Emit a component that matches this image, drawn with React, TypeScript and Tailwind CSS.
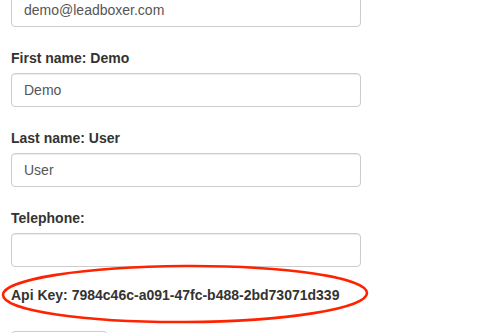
import type { FC } from 'react';

const font = { fontFamily: '"Liberation Sans", Arial, sans-serif' };

const Field: FC<{ label?: string; value: string }> = ({ label, value }) => (
  <div className="mb-[21px]">
    {label && (
      <label className="block mb-[5px] h-5 leading-5 text-[14px] font-bold text-[#333]">{label}</label>
    )}
    <input
      readOnly
      value={value}
      className="block w-full h-[34px] px-3 text-[14px] text-[#555] bg-white border border-[#ccc] rounded-[4px] shadow-[inset_0_1px_1px_rgba(0,0,0,0.075)] outline-none"
      style={font}
    />
  </div>
);

export default function App() {
  return (
    <div className="w-[496px] h-[333px] overflow-hidden bg-white" style={font}>
      <div className="relative w-[350px] ml-[11px] mt-[-7px]">
        <Field value="demo@leadboxer.com" />
        <Field label="First name: Demo" value="Demo" />
        <Field label="Last name: User" value="User" />
        <Field label="Telephone:" value="" />
        <div className="h-5 leading-5 text-[14px] font-bold text-[#333] mt-[-3px]">
          Api Key: 7984c46c-a091-47fc-b488-2bd73071d339
        </div>
        <div className="mt-[26px] w-[97px] h-[34px] border border-[#ccc] rounded-[4px] bg-white" />
        <svg
          className="absolute left-[-11px] top-[271px] pointer-events-none"
          width="372"
          height="62"
          viewBox="0 0 372 62"
        >
          <ellipse
            cx="185"
            cy="30"
            rx="182"
            ry="28"
            fill="none"
            stroke="#ff2200"
            strokeWidth="2.6"
            transform="rotate(-0.3 185 30)"
          />
        </svg>
      </div>
    </div>
  );
}
